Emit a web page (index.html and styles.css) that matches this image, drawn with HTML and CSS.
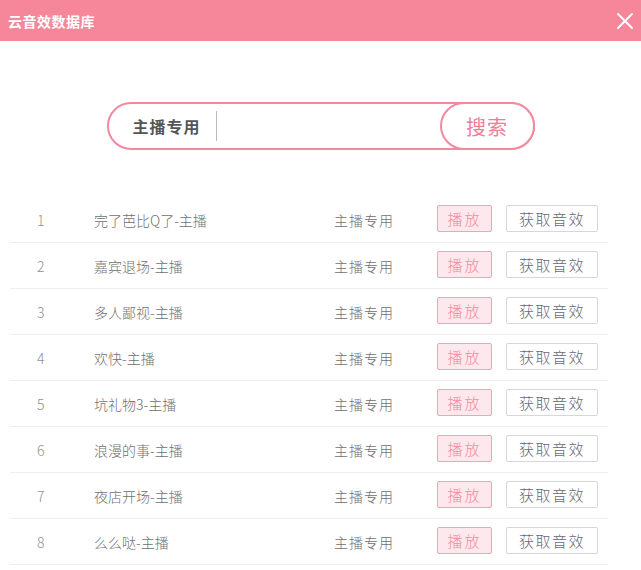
FILE: index.html
```html
<!DOCTYPE html>
<html lang="zh-CN">
<head>
    <meta charset="UTF-8">
    <title>云音效数据库</title>
    <link rel="stylesheet" href="styles.css">
</head>
<body>
    <div class="header">
        <span class="title">云音效数据库</span>
        <svg class="close" width="18" height="18" viewBox="0 0 18 18">
            <path d="M2 2 L16 16 M16 2 L2 16" stroke="#fff" stroke-width="2" stroke-linecap="round"/>
        </svg>
    </div>

    <div class="search">
        <span class="search-label">主播专用</span>
        <input type="text" class="search-input">
        <button class="search-btn">搜索</button>
    </div>

    <div class="list">
        <div class="row"><span class="num">1</span><span class="name">完了芭比Q了-主播</span><span class="cat">主播专用</span><button class="play">播放</button><button class="get">获取音效</button></div>
        <div class="row"><span class="num">2</span><span class="name">嘉宾退场-主播</span><span class="cat">主播专用</span><button class="play">播放</button><button class="get">获取音效</button></div>
        <div class="row"><span class="num">3</span><span class="name">多人鄙视-主播</span><span class="cat">主播专用</span><button class="play">播放</button><button class="get">获取音效</button></div>
        <div class="row"><span class="num">4</span><span class="name">欢快-主播</span><span class="cat">主播专用</span><button class="play">播放</button><button class="get">获取音效</button></div>
        <div class="row"><span class="num">5</span><span class="name">坑礼物3-主播</span><span class="cat">主播专用</span><button class="play">播放</button><button class="get">获取音效</button></div>
        <div class="row"><span class="num">6</span><span class="name">浪漫的事-主播</span><span class="cat">主播专用</span><button class="play">播放</button><button class="get">获取音效</button></div>
        <div class="row"><span class="num">7</span><span class="name">夜店开场-主播</span><span class="cat">主播专用</span><button class="play">播放</button><button class="get">获取音效</button></div>
        <div class="row"><span class="num">8</span><span class="name">么么哒-主播</span><span class="cat">主播专用</span><button class="play">播放</button><button class="get">获取音效</button></div>
    </div>
</body>
</html>
```

FILE: styles.css
```css
body {
    margin: 0;
    font-family: "Noto Sans CJK SC", "Noto Sans", sans-serif;
    background: #fff;
}
.header {
    height: 41px;
    background: #f6879b;
    display: flex;
    align-items: center;
    justify-content: space-between;
    padding: 0 7px 0 8px;
    box-sizing: border-box;
}
.title {
    color: #fff;
    font-size: 14px;
    font-weight: bold;
    letter-spacing: 0.5px;
}
.close {
    display: block;
}
.search {
    width: 428px;
    height: 48px;
    margin: 61px auto 0;
    border: 2px solid #f3899f;
    border-radius: 24px;
    box-sizing: border-box;
    display: flex;
    align-items: center;
}
.search-label {
    font-size: 16px;
    font-weight: bold;
    color: #555;
    padding-left: 24px;
    padding-right: 15px;
    letter-spacing: 1px;
    border-right: 1px solid #bbb;
    line-height: 30px;
}
.search-input {
    flex: 1;
    border: none;
    outline: none;
    height: 30px;
}
.search-btn {
    width: 95px;
    height: 48px;
    margin-right: -2px;
    border: 2px solid #f3899f;
    border-radius: 24px;
    background: #fff;
    color: #f07d95;
    font-size: 20px;
    font-family: inherit;
    letter-spacing: 1px;
    padding: 0;
}
.list {
    margin: 47px 0 0 10px;
    width: 598px;
}
.row {
    height: 46px;
    display: grid;
    grid-template-columns: 57px 240px 103px 55px 92px;
    align-items: center;
    padding-left: 27px;
    border-bottom: 1px solid #eeeeee;
    box-sizing: border-box;
    font-size: 14px;
    font-weight: 300;
    color: #707070;
}
.row .get {
    margin-left: 14px;
}
.num {
    color: #909090;
}
.cat {
    letter-spacing: 1px;
}
.play, .get {
    height: 27px;
    font-family: inherit;
    font-size: 15px;
    font-weight: 300;
    border-radius: 2px;
    padding: 0;
    margin-top: -3px;
}
.play {
    background: #fde8ed;
    border: 1px solid #f3a3b3;
    color: #f48aa0;
    letter-spacing: 2px;
}
.get {
    background: #fff;
    border: 1px solid #d6d6dc;
    color: #666a78;
    letter-spacing: 1.5px;
    width: 92px;
}
```
